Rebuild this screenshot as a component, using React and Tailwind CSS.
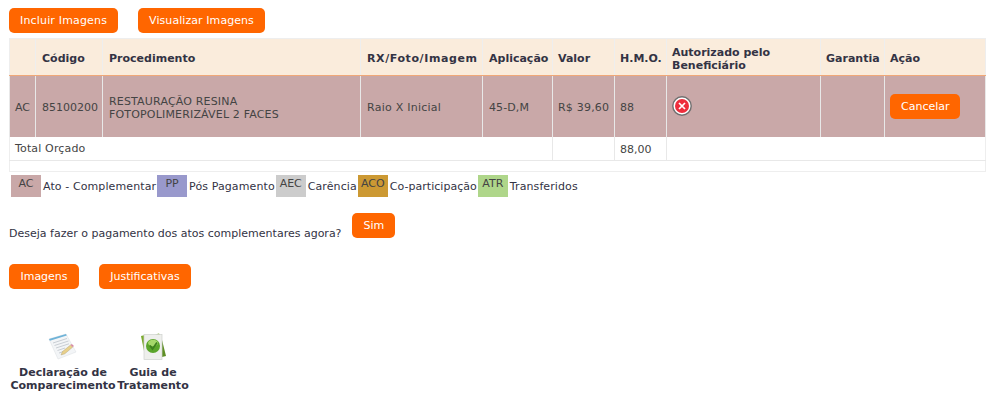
const font = { fontFamily: '"DejaVu Sans", Verdana, sans-serif' };

function Btn({ children, className = "" }) {
  return (
    <button className={`h-[25px] rounded-[5px] bg-[#ff6600] px-[11px] text-[11px] leading-[25px] text-white ${className}`}>
      {children}
    </button>
  );
}

function Th({ children, className = "" }) {
  return (
    <th className={`border-x border-[#eeeeee] border-b border-b-[#f0a878] pl-[5px] pr-[3px] pt-[3px] text-left align-middle text-[11px] font-bold leading-[13px] text-[#333344] ${className}`}>
      {children}
    </th>
  );
}

function Td({ children, className = "" }) {
  return (
    <td className={`border-x border-[#e8e8e8] pl-[5px] pr-[3px] pt-[3px] align-middle text-[11px] leading-[13px] text-[#444444] ${className}`}>
      {children}
    </td>
  );
}

function Legend({ code, color, label, className = "" }) {
  return (
    <div className="flex items-stretch">
      <span className={`flex h-[22px] w-[30px] justify-center pt-[2px] text-[11px] leading-[13px] text-[#444444] ${color}`}>{code}</span>
      <span className={`ml-[2px] self-center pt-[2px] text-[11px] tracking-[0.1px] text-[#333344] ${className}`}>{label}</span>
    </div>
  );
}

function DocIcon() {
  return (
    <svg width="30" height="30" viewBox="0 0 30 30">
      <path d="M1 7 L18 2 L28 20 L10 27 Z" fill="#f3f5f7" stroke="#dfe2e5" strokeWidth="0.6" />
      <path d="M1 7 L18 2 L18.8 3.6 L1.9 8.8 Z" fill="#6fb3d8" />
      <path d="M5 11 L19 6.5 M6.5 13.5 L20.5 9 M8 16 L21 11.8 M9.5 18.5 L17 16 M11 21 L15 19.7" stroke="#c9ced4" strokeWidth="1" />
      <path d="M13 23 L14.5 19.5 L22.5 13 L24.8 15 L16.8 21.8 Z" fill="#e9d08a" stroke="#a99a6c" strokeWidth="0.4" />
      <path d="M22.5 13 L23.8 12 L26 14 L24.8 15 Z" fill="#d98aa5" />
    </svg>
  );
}

function GuideIcon() {
  return (
    <svg width="30" height="30" viewBox="0 0 30 30">
      <path d="M3 4 L7 3 L7 24 Z" fill="#7cab2f" />
      <path d="M17 2.5 L21 1.5 L22 3 Z" fill="#7cab2f" />
      <path d="M24 8 L28 24 L24 25 Z" fill="#5f8f25" />
      <rect x="6" y="2.5" width="18" height="25" fill="#eeefec" stroke="#cfd2cf" strokeWidth="0.7" />
      <circle cx="15" cy="14" r="7" fill="#5aa52a" />
      <ellipse cx="15" cy="11" rx="5" ry="3.2" fill="#a6d86a" />
      <path d="M12 13.5 L14.5 17 L19 10.5" fill="none" stroke="#3e7f1f" strokeWidth="1.8" />
    </svg>
  );
}

export default function App() {
  return (
    <div style={font} className="h-[408px] w-[994px] overflow-hidden bg-white pt-[8px] pl-[9px] pr-[9px]">
      <div className="flex gap-[20px]">
        <Btn className="tracking-[0.17px]">Incluir Imagens</Btn>
        <Btn className="tracking-[0.07px]">Visualizar Imagens</Btn>
      </div>

      <table className="mt-[5px] w-[976px] table-fixed border-collapse border border-[#eeeeee]">
        <colgroup>
          <col className="w-[26px]" />
          <col className="w-[67px]" />
          <col className="w-[258px]" />
          <col className="w-[122px]" />
          <col className="w-[70px]" />
          <col className="w-[62px]" />
          <col className="w-[52px]" />
          <col className="w-[154px]" />
          <col className="w-[64px]" />
          <col className="w-[101px]" />
        </colgroup>
        <thead>
          <tr className="h-[37px] bg-[#faecdc]">
            <Th></Th>
            <Th className="pl-[6px]">Código</Th>
            <Th className="pl-[6px]">Procedimento</Th>
            <Th className="pl-[6px] tracking-[0.6px]">RX/Foto/Imagem</Th>
            <Th className="pl-[6px]">Aplicação</Th>
            <Th>Valor</Th>
            <Th>H.M.O.</Th>
            <Th className="pt-0">Autorizado pelo Beneficiário</Th>
            <Th>Garantia</Th>
            <Th>Ação</Th>
          </tr>
        </thead>
        <tbody>
          <tr className="h-[61px] bg-[#c9a8a8]">
            <Td>AC</Td>
            <Td className="pl-[6px]">85100200</Td>
            <Td className="pl-[6px] tracking-[0.17px]">
              RESTAURAÇÃO RESINA
              <br />
              FOTOPOLIMERIZÁVEL 2 FACES
            </Td>
            <Td className="pl-[6px] tracking-[0.25px]">Raio X Inicial</Td>
            <Td className="pl-[6px] tracking-[0.1px]">45-D,M</Td>
            <Td className="tracking-[0.2px]">R$ 39,60</Td>
            <Td>88</Td>
            <Td className="pt-0 pb-[3px]">
              <svg width="20" height="20" viewBox="0 0 20 20" className="block">
                <circle cx="10" cy="10" r="9.2" fill="#fff" stroke="#6f6f6f" strokeWidth="1.4" />
                <circle cx="10" cy="10" r="7" fill="#ee2d3c" />
                <path d="M7 7 L13 13 M13 7 L7 13" stroke="#fff" strokeWidth="1.7" />
              </svg>
            </Td>
            <Td></Td>
            <Td className="pt-0 pb-[2px]">
              <Btn className="block w-[70px] px-0">Cancelar</Btn>
            </Td>
          </tr>
          <tr className="h-[24px] border-b border-[#e8e8e8]">
            <td colSpan={5} className="border-r border-[#e8e8e8] px-[5px] pt-[1px] text-[11px] tracking-[0.15px] text-[#444444]">Total Orçado</td>
            <Td className="pt-[1px]"></Td>
            <Td className="pt-[1px]">88,00</Td>
            <td colSpan={3} className="border-l border-[#e8e8e8]"></td>
          </tr>
          <tr className="h-[11px]">
            <td colSpan={10}></td>
          </tr>
        </tbody>
      </table>

      <div className="ml-[2px] mt-[3px] flex gap-[1px]">
        <Legend code="AC" color="bg-[#c9a8a8]" label="Ato - Complementar" />
        <Legend code="PP" color="bg-[#9999cc]" label="Pós Pagamento" />
        <Legend code="AEC" color="bg-[#cccccc]" label="Carência" />
        <Legend code="ACO" color="bg-[#cc9933]" label="Co-participação" className="tracking-[0.03px]" />
        <Legend code="ATR" color="bg-[#afd68a]" label="Transferidos" />
      </div>

      <div className="mt-[16px] flex items-start">
        <span className="mt-[14px] text-[11px] leading-[13px] text-[#333344]">Deseja fazer o pagamento dos atos complementares agora?</span>
        <Btn className="ml-[11px]">Sim</Btn>
      </div>

      <div className="mt-[24px] flex gap-[20px]">
        <Btn className="w-[70px] px-0">Imagens</Btn>
        <Btn className="w-[92px] px-0">Justificativas</Btn>
      </div>

      <div className="mt-[43px] flex">
        <a className="ml-[2px] flex w-[104px] flex-col items-center text-center text-[11px] font-bold leading-[13px] text-[#333344]">
          <DocIcon />
          <span className="mt-[4px]">Declaração de Comparecimento</span>
        </a>
        <a className="ml-[2px] flex w-[72px] flex-col items-center text-center text-[11px] font-bold leading-[13px] text-[#333344]">
          <GuideIcon />
          <span className="mt-[4px]">Guia de Tratamento</span>
        </a>
      </div>
    </div>
  );
}
